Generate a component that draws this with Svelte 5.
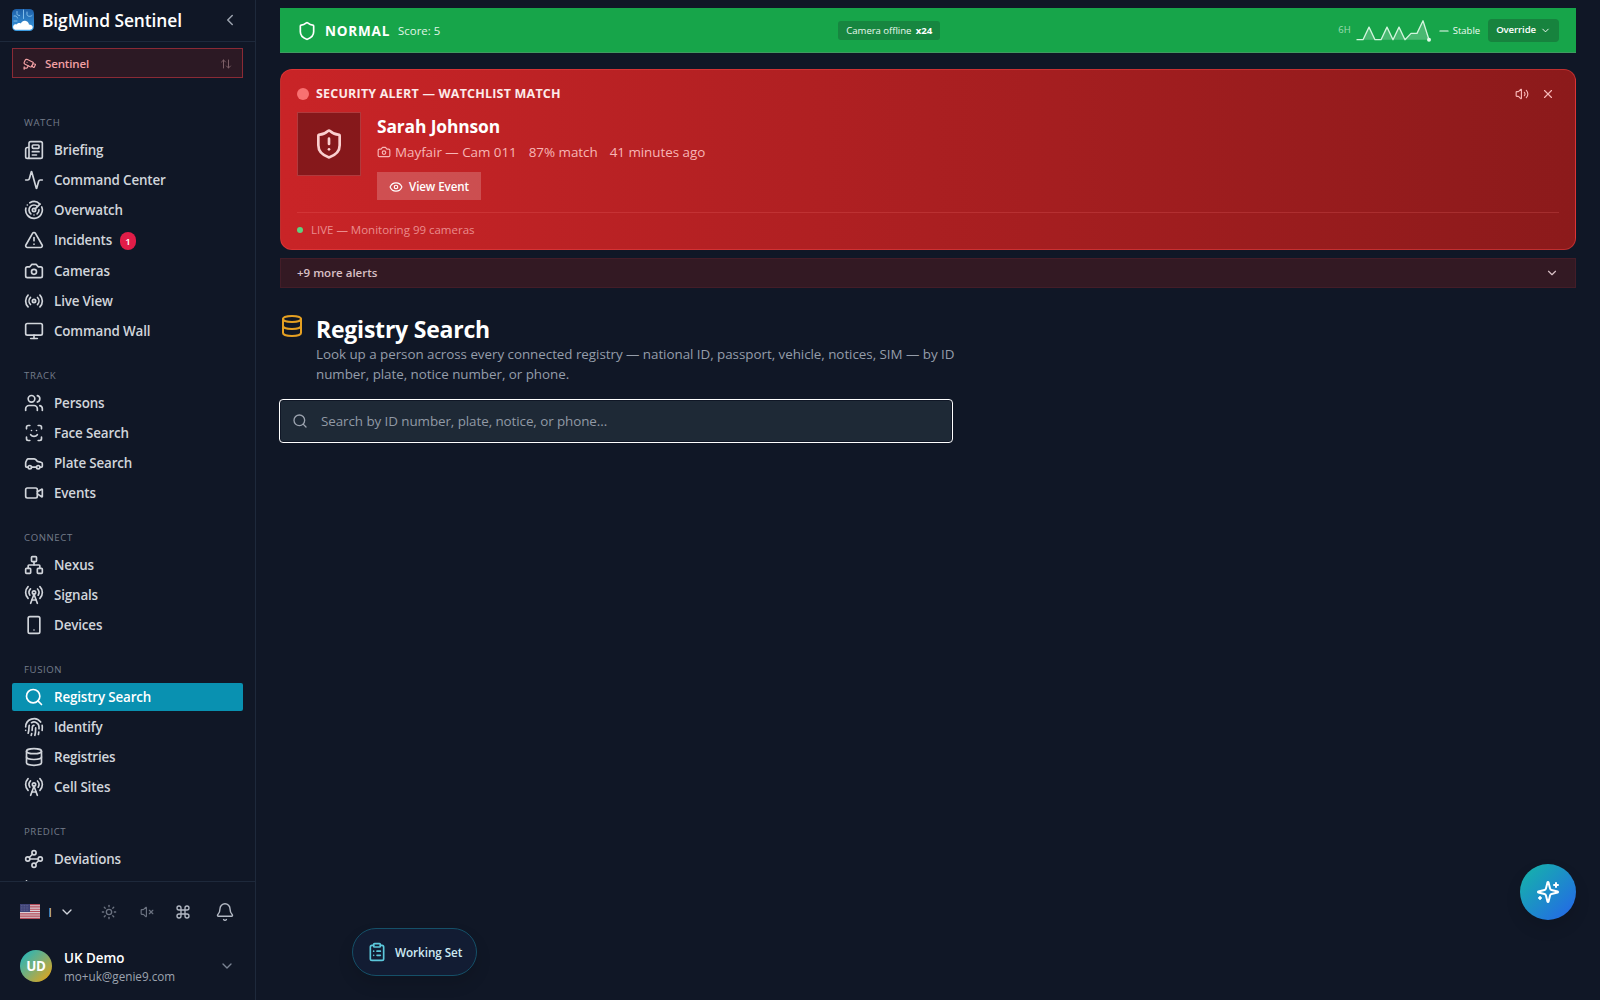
<script>
  const icons = {
    newspaper: '<path d="M15 18h-5"/><path d="M18 14h-8"/><path d="M4 22h16a2 2 0 0 0 2-2V4a2 2 0 0 0-2-2H8a2 2 0 0 0-2 2v16a2 2 0 0 1-4 0v-9a2 2 0 0 1 2-2h2"/><rect width="8" height="4" x="10" y="6" rx="1"/>',
    activity: '<path d="M22 12h-2.48a2 2 0 0 0-1.93 1.46l-2.35 8.36a.25.25 0 0 1-.48 0L9.24 2.18a.25.25 0 0 0-.48 0l-2.35 8.36A2 2 0 0 1 4.49 12H2"/>',
    radar: '<path d="M19.07 4.93A10 10 0 0 0 6.99 3.34"/><path d="M4 6h.01"/><path d="M2.29 9.62A10 10 0 1 0 21.31 8.35"/><path d="M16.24 7.76A6 6 0 1 0 8.23 16.67"/><path d="M12 18h.01"/><path d="M17.99 11.66A6 6 0 0 1 15.77 16.67"/><circle cx="12" cy="12" r="2"/><path d="m13.41 10.59 5.66-5.66"/>',
    alert: '<path d="m21.73 18-8-14a2 2 0 0 0-3.48 0l-8 14A2 2 0 0 0 4 21h16a2 2 0 0 0 1.73-3"/><path d="M12 9v4"/><path d="M12 17h.01"/>',
    camera: '<path d="M14.5 4h-5L7 7H4a2 2 0 0 0-2 2v9a2 2 0 0 0 2 2h16a2 2 0 0 0 2-2V9a2 2 0 0 0-2-2h-3l-2.5-3z"/><circle cx="12" cy="13" r="3"/>',
    radio: '<path d="M4.9 19.1C1 15.2 1 8.8 4.9 4.9"/><path d="M7.8 16.2c-2.3-2.3-2.3-6.1 0-8.5"/><circle cx="12" cy="12" r="2"/><path d="M16.2 7.8c2.3 2.3 2.3 6.1 0 8.5"/><path d="M19.1 4.9C23 8.8 23 15.1 19.1 19"/>',
    monitor: '<rect width="20" height="14" x="2" y="3" rx="2"/><path d="M8 21h8"/><path d="M12 17v4"/>',
    users: '<path d="M16 21v-2a4 4 0 0 0-4-4H6a4 4 0 0 0-4 4v2"/><circle cx="9" cy="7" r="4"/><path d="M22 21v-2a4 4 0 0 0-3-3.87"/><path d="M16 3.13a4 4 0 0 1 0 7.75"/>',
    face: '<path d="M3 7V5a2 2 0 0 1 2-2h2"/><path d="M17 3h2a2 2 0 0 1 2 2v2"/><path d="M21 17v2a2 2 0 0 1-2 2h-2"/><path d="M7 21H5a2 2 0 0 1-2-2v-2"/><path d="M8 14s1.5 2 4 2 4-2 4-2"/><path d="M9 9h.01"/><path d="M15 9h.01"/>',
    car: '<path d="M19 17h2c.6 0 1-.4 1-1v-3c0-.9-.7-1.7-1.5-1.9C18.7 10.6 16 10 16 10s-1.3-1.4-2.2-2.3c-.5-.4-1.1-.7-1.8-.7H5c-.6 0-1.1.4-1.4.9l-1.4 2.9A3.7 3.7 0 0 0 2 12v4c0 .6.4 1 1 1h2"/><circle cx="7" cy="17" r="2"/><path d="M9 17h6"/><circle cx="17" cy="17" r="2"/>',
    video: '<path d="m16 13 5.223 3.482a.5.5 0 0 0 .777-.416V7.87a.5.5 0 0 0-.752-.432L16 10.5"/><rect x="2" y="6" width="14" height="12" rx="2"/>',
    network: '<rect x="16" y="16" width="6" height="6" rx="1"/><rect x="2" y="16" width="6" height="6" rx="1"/><rect x="9" y="2" width="6" height="6" rx="1"/><path d="M5 16v-3a1 1 0 0 1 1-1h12a1 1 0 0 1 1 1v3"/><path d="M12 12V8"/>',
    tower: '<path d="M4.9 16.1C1 12.2 1 5.8 4.9 1.9"/><path d="M7.8 4.7a6.14 6.14 0 0 0-.8 7.5"/><circle cx="12" cy="9" r="2"/><path d="M16.2 4.8c2 2 2.26 5.11.8 7.47"/><path d="M19.1 1.9a9.96 9.96 0 0 1 0 14.1"/><path d="M9.5 18h5"/><path d="m8 22 4-11 4 11"/>',
    phone: '<rect width="14" height="20" x="5" y="2" rx="2"/><path d="M12 18h.01"/>',
    search: '<circle cx="11" cy="11" r="8"/><path d="m21 21-4.3-4.3"/>',
    fingerprint: '<path d="M12 10a2 2 0 0 0-2 2c0 1.02-.1 2.51-.26 4"/><path d="M14 13.12c0 2.38 0 6.38-1 8.88"/><path d="M17.29 21.02c.12-.6.43-2.3.5-3.02"/><path d="M2 12a10 10 0 0 1 18-6"/><path d="M2 16h.01"/><path d="M21.8 16c.2-2 .131-5.354 0-6"/><path d="M5 19.5C5.5 18 6 15 6 12a6 6 0 0 1 .34-2"/><path d="M8.65 22c.21-.66.45-1.32.57-2"/><path d="M9 6.8a6 6 0 0 1 9 5.2v2"/>',
    database: '<ellipse cx="12" cy="5" rx="9" ry="3"/><path d="M3 5V19A9 3 0 0 0 21 19V5"/><path d="M3 12A9 3 0 0 0 21 12"/>',
    waypoints: '<circle cx="12" cy="4.5" r="2.5"/><path d="m10.2 6.3-3.9 3.9"/><circle cx="4.5" cy="12" r="2.5"/><path d="M7 12h10"/><circle cx="19.5" cy="12" r="2.5"/><path d="m13.8 17.7 3.9-3.9"/><circle cx="12" cy="19.5" r="2.5"/>',
    chart: '<path d="M3 2.200v16.800a2 2 0 0 0 2 2h16"/><path d="m19 9-5 5-4-4-3 3"/>',
    cctv: '<path d="M16.75 12h3.632a1 1 0 0 1 .894 1.447l-2.034 4.069a1 1 0 0 1-1.708.134l-2.124-2.97"/><path d="M17.106 9.053a1 1 0 0 1 .447 1.341l-3.106 6.211a1 1 0 0 1-1.342.447L3.61 12.3a2.92 2.92 0 0 1-1.3-3.91L3.69 5.6a2.92 2.92 0 0 1 3.92-1.3z"/><path d="M2 19h3.76a2 2 0 0 0 1.8-1.1L9 15"/><path d="M2 21v-4"/><path d="M7 9h.01"/>',
    swap: '<path d="m21 16-4 4-4-4"/><path d="M17 20V4"/><path d="m3 8 4-4 4 4"/><path d="M7 4v16"/>',
    left: '<path d="m15 18-6-6 6-6"/>',
    down: '<path d="m6 9 6 6 6-6"/>',
    sun: '<circle cx="12" cy="12" r="4"/><path d="M12 2v2"/><path d="M12 20v2"/><path d="m4.93 4.93 1.41 1.41"/><path d="m17.66 17.66 1.41 1.41"/><path d="M2 12h2"/><path d="M20 12h2"/><path d="m6.34 17.66-1.41 1.41"/><path d="m19.07 4.93-1.41 1.41"/>',
    mute: '<path d="M11 4.702a.705.705 0 0 0-1.203-.498L6.413 7.587A1.4 1.4 0 0 1 5.416 8H3a1 1 0 0 0-1 1v6a1 1 0 0 0 1 1h2.416a1.4 1.4 0 0 1 .997.413l3.383 3.384A.705.705 0 0 0 11 19.298z"/><path d="m22 9-6 6"/><path d="m16 9 6 6"/>',
    volume: '<path d="M11 4.702a.705.705 0 0 0-1.203-.498L6.413 7.587A1.4 1.4 0 0 1 5.416 8H3a1 1 0 0 0-1 1v6a1 1 0 0 0 1 1h2.416a1.4 1.4 0 0 1 .997.413l3.383 3.384A.705.705 0 0 0 11 19.298z"/><path d="M16 9a5 5 0 0 1 0 6"/><path d="M19.364 18.364a9 9 0 0 0 0-12.728"/>',
    command: '<path d="M15 6v12a3 3 0 1 0 3-3H6a3 3 0 1 0 3 3V6a3 3 0 1 0-3 3h12a3 3 0 1 0-3-3"/>',
    bell: '<path d="M10.268 21a2 2 0 0 0 3.464 0"/><path d="M3.262 15.326A1 1 0 0 0 4 17h16a1 1 0 0 0 .74-1.673C19.41 13.956 18 12.499 18 8A6 6 0 0 0 6 8c0 4.499-1.411 5.956-2.738 7.326"/>',
    shield: '<path d="M20 13c0 5-3.5 7.5-7.66 8.95a1 1 0 0 1-.67-.01C7.5 20.5 4 18 4 13V6a1 1 0 0 1 1-1c2 0 4.5-1.2 6.24-2.72a1.17 1.17 0 0 1 1.52 0C14.51 3.81 17 5 19 5a1 1 0 0 1 1 1z"/>',
    shieldAlert: '<path d="M20 13c0 5-3.5 7.5-7.66 8.95a1 1 0 0 1-.67-.01C7.5 20.5 4 18 4 13V6a1 1 0 0 1 1-1c2 0 4.5-1.2 6.24-2.72a1.17 1.17 0 0 1 1.52 0C14.51 3.81 17 5 19 5a1 1 0 0 1 1 1z"/><path d="M12 8v4"/><path d="M12 16h.01"/>',
    eye: '<path d="M2.062 12.348a1 1 0 0 1 0-.696 10.75 10.75 0 0 1 19.876 0 1 1 0 0 1 0 .696 10.75 10.75 0 0 1-19.876 0"/><circle cx="12" cy="12" r="3"/>',
    close: '<path d="M18 6 6 18"/><path d="m6 6 12 12"/>',
    minus: '<path d="M5 12h14"/>',
    clipboard: '<rect width="8" height="4" x="8" y="2" rx="1"/><path d="M16 4h2a2 2 0 0 1 2 2v14a2 2 0 0 1-2 2H6a2 2 0 0 1-2-2V6a2 2 0 0 1 2-2h2"/><path d="M12 11h4"/><path d="M12 16h4"/><path d="M8 11h.01"/><path d="M8 16h.01"/>',
    sparkles: '<path d="M9.937 15.5A2 2 0 0 0 8.5 14.063l-6.135-1.582a.5.5 0 0 1 0-.962L8.5 9.936A2 2 0 0 0 9.937 8.5l1.582-6.135a.5.5 0 0 1 .963 0L14.063 8.5A2 2 0 0 0 15.5 9.937l6.135 1.581a.5.5 0 0 1 0 .964L15.5 14.063a2 2 0 0 0-1.437 1.437l-1.582 6.135a.5.5 0 0 1-.963 0z"/><path d="M20 3v4"/><path d="M22 5h-4"/><path d="M4 17v2"/><path d="M5 18H3"/>'
  };

  const sections = [
    { title: 'WATCH', items: [
      { label: 'Briefing', icon: 'newspaper' },
      { label: 'Command Center', icon: 'activity' },
      { label: 'Overwatch', icon: 'radar' },
      { label: 'Incidents', icon: 'alert', badge: 1 },
      { label: 'Cameras', icon: 'camera' },
      { label: 'Live View', icon: 'radio' },
      { label: 'Command Wall', icon: 'monitor' }
    ] },
    { title: 'TRACK', items: [
      { label: 'Persons', icon: 'users' },
      { label: 'Face Search', icon: 'face' },
      { label: 'Plate Search', icon: 'car' },
      { label: 'Events', icon: 'video' }
    ] },
    { title: 'CONNECT', items: [
      { label: 'Nexus', icon: 'network' },
      { label: 'Signals', icon: 'tower' },
      { label: 'Devices', icon: 'phone' }
    ] },
    { title: 'FUSION', items: [
      { label: 'Registry Search', icon: 'search', active: true },
      { label: 'Identify', icon: 'fingerprint' },
      { label: 'Registries', icon: 'database' },
      { label: 'Cell Sites', icon: 'tower' }
    ] },
    { title: 'PREDICT', items: [
      { label: 'Deviations', icon: 'waypoints' },
      { label: '', icon: 'chart' }
    ] }
  ];

  const scores = [0, 0, 2, 0, 0, 2, 0, 2, 0, 1, 1, 3, 0];
  const line = scores.map((s, i) => `${1 + i * 6},${20.7 - s * 6.3}`).join(' ');
</script>

{#snippet icon(name, size = 20, stroke = 2)}
  <svg class="icon" width={size} height={size} viewBox="0 0 24 24" fill="none" stroke="currentColor" stroke-width={stroke} stroke-linecap="round" stroke-linejoin="round">{@html icons[name]}</svg>
{/snippet}

<div class="app">
  <aside>
    <header class="brand">
      <svg class="logo" width="22" height="22" viewBox="0 0 22 22">
        <defs>
          <linearGradient id="sky" x1="0" y1="0" x2="0" y2="1">
            <stop offset="0" stop-color="#1d5fa8" /><stop offset="1" stop-color="#3b9be0" />
          </linearGradient>
        </defs>
        <rect width="22" height="22" rx="4.5" fill="url(#sky)" />
        <path d="M2 7c2-.5 3 .5 3.500 2M5 2.500v2c0 1.500 1 2 2.500 2M11.500 1v8.500M15 3v2.500c0 2 3.500 2.500 5 1M2 12h3" fill="none" stroke="#8cc6ef" stroke-width=".9" stroke-linecap="round" />
        <path d="M4 20.800c-2.500 0-3.500-2.300-2.600-4 .7-1.400 2.300-1.700 3.200-1.300.8-1.400 2.800-1.900 4.300-1 .9-2.400 3-3.200 5-2.600 2 .6 3 2 3 3.600 2 0 3.800 1 3.800 2.800 0 1.600-1.200 2.500-3 2.500z" fill="#fff" />
      </svg>
      <h1>BigMind Sentinel</h1>
      <button class="plain collapse">{@render icon('left', 18)}</button>
    </header>

    <button class="switcher">
      {@render icon('cctv', 14)}
      <span>Sentinel</span>
      <i>{@render icon('swap', 12)}</i>
    </button>

    <nav>
      {#each sections as section}
        <h2>{section.title}</h2>
        <ul>
          {#each section.items as item}
            <li class:active={item.active} class:tall={item.badge}>
              {@render icon(item.icon)}
              <span>{item.label}</span>
              {#if item.badge}<b>{item.badge}</b>{/if}
            </li>
          {/each}
        </ul>
      {/each}
    </nav>

    <footer>
      <div class="tools">
        <button class="plain lang">
          <svg width="20" height="15" viewBox="0 0 20 15">
            <rect width="20" height="15" fill="#d9ccd3" />
            <path d="M0 .6h20M0 2.900h20M0 5.200h20M0 7.500h20M0 9.800h20M0 12.100h20M0 14.400h20" stroke="#b54c5b" stroke-width="1.150" />
            <rect width="10" height="8" fill="#3f4377" />
            <path d="M1 1.500h8M1 3.200h8M1 4.900h8M1 6.600h8" stroke="#7477a0" stroke-width=".6" stroke-dasharray=".8 .8" />
          </svg>
          <span>I</span>
          {@render icon('down', 16)}
        </button>
        <button class="plain dim sun">{@render icon('sun', 16)}</button>
        <button class="plain dim mute">{@render icon('mute', 14)}</button>
        <button class="plain cmd">{@render icon('command', 16)}</button>
        <button class="plain bell">{@render icon('bell', 20, 1.7)}</button>
      </div>
      <div class="user">
        <div class="avatar">UD</div>
        <div class="who">
          <strong>UK Demo</strong>
          <small>mo+uk@genie9.com</small>
        </div>
        {@render icon('down', 16)}
      </div>
    </footer>
  </aside>

  <main>
    <section class="status">
      <div class="level">
        {@render icon('shield', 20)}
        <strong>NORMAL</strong>
        <span>Score: 5</span>
      </div>
      <div class="chip">Camera offline <b>x24</b></div>
      <div class="trend">
        <span class="range">6H</span>
        <svg class="spark" width="76" height="24" viewBox="0 0 76 24">
          <polygon points="1,20.7 {line} 73,20.7" fill="#fff" fill-opacity=".22" />
          <polyline points={line} fill="none" stroke="#d3f5de" stroke-width="1.300" stroke-linejoin="round" stroke-linecap="round" />
          <circle cx="73" cy="20.7" r="2" fill="#e4faeb" />
        </svg>
        <span class="stable">{@render icon('minus', 14)}Stable</span>
        <button class="override">Override {@render icon('down', 11)}</button>
      </div>
    </section>

    <section class="alert">
      <div class="alert-head">
        <i class="pulse"></i>
        <h3>SECURITY ALERT — WATCHLIST MATCH</h3>
        <button class="plain">{@render icon('volume', 14)}</button>
        <button class="plain">{@render icon('close', 14)}</button>
      </div>
      <div class="alert-body">
        <div class="thumb">{@render icon('shieldAlert', 32)}</div>
        <div class="details">
          <h4>Sarah Johnson</h4>
          <p>
            <span class="cam">{@render icon('camera', 14)}Mayfair — Cam 011</span>
            <span>87% match</span>
            <span>41 minutes ago</span>
          </p>
          <button class="view">{@render icon('eye', 14)}View Event</button>
        </div>
      </div>
      <div class="live"><i></i>LIVE — Monitoring 99 cameras</div>
    </section>

    <button class="more">+9 more alerts {@render icon('down', 14)}</button>

    <div class="heading">
      {@render icon('database', 24)}
      <div>
        <h1>Registry Search</h1>
        <p>Look up a person across every connected registry — national ID, passport, vehicle, notices, SIM — by ID<br />number, plate, notice number, or phone.</p>
      </div>
    </div>

    <label class="search">
      {@render icon('search', 16)}
      <input placeholder="Search by ID number, plate, notice, or phone..." />
    </label>
  </main>

  <button class="working">{@render icon('clipboard', 20)}Working Set</button>
  <button class="fab">{@render icon('sparkles', 24)}</button>
</div>

<style>
  :global(body) { background: #101726; overflow: hidden; }
  .app {
    position: relative;
    display: flex;
    width: 1600px;
    height: 1000px;
    overflow: hidden;
    color: #d1d5db;
    background: #101726;
    font: 400 13.4px/20px 'Open Sans', 'Noto Sans', sans-serif;
  }
  h1, h2, h3, h4, p, ul { margin: 0; padding: 0; list-style: none; }
  button { margin: 0; padding: 0; border: 0; font: inherit; color: inherit; background: none; }
  i { font-style: normal; }
  .icon { display: block; flex: none; }
  .plain { display: flex; align-items: center; }

  aside {
    display: flex;
    flex-direction: column;
    flex: none;
    box-sizing: border-box;
    width: 256px;
    border-right: 1px solid #1e293b;
  }
  .brand {
    display: flex;
    align-items: center;
    box-sizing: border-box;
    height: 42px;
    padding: 0 16px 1px 12px;
    border-bottom: 1px solid #1e293b;
  }
  .brand h1 { margin-left: 8px; font-size: 17.4px; font-weight: 600; letter-spacing: -.1px; color: #fff; }
  .collapse { margin-left: auto; color: #9ca3af; }

  .switcher {
    display: flex;
    align-items: center;
    flex: none;
    gap: 8px;
    box-sizing: border-box;
    height: 30px;
    margin: 6px 12px 0;
    padding: 1px 10px 0;
    border: 1px solid #8a2a35;
    background: #2c1924;
    color: #f2a0a3;
    font-size: 11.5px;
    font-weight: 600;
    letter-spacing: -.14px;
  }
  .switcher i { margin-left: auto; color: #7d5f67; }

  nav { flex: 1; min-height: 0; padding: 14px 12px 0; overflow: hidden; }
  nav h2 {
    box-sizing: border-box;
    height: 44px;
    padding: 23px 12px 5px;
    font-size: 9.6px;
    font-weight: 400;
    line-height: 16px;
    letter-spacing: .6px;
    color: #747c8a;
  }
  ul { display: flex; flex-direction: column; gap: 2px; }
  li {
    display: flex;
    align-items: center;
    gap: 10px;
    height: 28px;
    padding: 0 12px;
    border-radius: 2px;
    font-weight: 600;
    letter-spacing: -.15px;
  }
  li.tall { box-sizing: border-box; height: 29px; padding-bottom: 1px; }
  li.active { background: #0991b1; color: #fff; }
  li b {
    display: grid;
    place-items: center;
    width: 16px;
    height: 18px;
    margin: 1px 0 0 -2px;
    border-radius: 9px;
    background: #e11d48;
    color: #fff;
    font-size: 9.6px;
    font-weight: 600;
    letter-spacing: 0;
  }

  footer {
    flex: none;
    box-sizing: border-box;
    height: 119px;
    border-top: 1px solid #1e293b;
  }
  .tools { display: flex; align-items: center; height: 59px; margin-bottom: 2px; padding-left: 20px; color: #b3b9c4; }
  .lang { color: #d1d5db; }
  .lang span { width: 4px; margin: 0 7px 0 8px; }
  .lang .icon { width: 16px; }
  .dim { color: #6b7280; }
  .sun { margin-left: 26px; }
  .mute { margin-left: 23px; }
  .cmd { margin-left: 21px; }
  .bell { margin-left: 24px; }
  .user { display: flex; align-items: center; height: 46px; padding: 0 20px; color: #7b8493; }
  .avatar {
    display: grid;
    place-items: center;
    width: 32px;
    height: 32px;
    border-radius: 50%;
    background: linear-gradient(135deg, #2bb5b5 10%, #7fae74 50%, #dba51f 90%);
    color: #fff;
    font-size: 13.4px;
    font-weight: 700;
    letter-spacing: -.3px;
  }
  .who { flex: 1; margin-left: 12px; }
  .who strong { display: block; color: #fff; font-weight: 600; line-height: 20px; letter-spacing: 0; }
  .who small { display: block; color: #9ca3af; font-size: 11.7px; line-height: 16px; }

  main { flex: 1; min-width: 0; padding: 8px 24px 0; }

  .status {
    display: flex;
    align-items: center;
    justify-content: space-between;
    box-sizing: border-box;
    height: 45px;
    padding: 0 17px;
    border-bottom: 1px solid #3f9c61;
    background: #17a54a;
    color: #fff;
  }
  .level { display: flex; align-items: center; gap: 8px; padding-top: 1px; }
  .level strong { font-size: 13.5px; font-weight: 700; letter-spacing: .8px; }
  .level span { font-size: 11.4px; color: #e0f6e7; }
  .chip {
    padding: 0 8px;
    border-radius: 3px;
    background: #178640;
    color: #e9f8ee;
    font-size: 9.6px;
    font-weight: 500;
    line-height: 19px;
    letter-spacing: -.05px;
  }
  .chip b { margin-left: 2px; font-weight: 700; color: #fff; }
  .trend { display: flex; align-items: center; font-size: 9.5px; }
  .range { color: #9fdcb3; }
  .spark { margin: 2px 0 0 5px; }
  .stable { display: flex; align-items: center; gap: 2px; margin: 0 8px 0 5px; padding-top: 1px; font-weight: 500; color: #f0fbf3; }
  .stable .icon { width: 14px; }
  .override {
    display: flex;
    align-items: center;
    gap: 4px;
    height: 23px;
    padding: 0 8px;
    border-radius: 4px;
    background: #17833e;
    font-size: 9.6px;
    font-weight: 600;
    letter-spacing: -.1px;
    color: #fff;
  }

  .alert {
    box-sizing: border-box;
    height: 181px;
    margin-top: 16px;
    padding: 16px 16px 0;
    border: 1px solid rgba(239, 68, 68, .5);
    border-radius: 12px;
    background: linear-gradient(to right, #c92427, #8c1a1b);
    color: #f7b6b6;
  }
  .alert-head { display: flex; align-items: center; height: 15px; }
  .pulse { width: 12px; height: 12px; border-radius: 50%; background: #f87171; }
  .alert-head h3 { flex: 1; margin-left: 7px; padding-top: 1px; font-size: 12.5px; font-weight: 700; letter-spacing: .2px; color: #fdeaea; }
  .alert-head .plain { margin-right: 4px; }
  .alert-head .plain + .plain { margin-left: 8px; }
  .alert-body { display: flex; gap: 16px; margin-top: 11px; }
  .thumb {
    display: grid;
    place-items: center;
    box-sizing: border-box;
    width: 64px;
    height: 64px;
    border: 1px solid #b03a3d;
    background: #86181b;
    color: #fbcfcf;
  }
  .details h4 { margin-top: 1px; font-size: 17.4px; font-weight: 700; line-height: 26px; letter-spacing: -.13px; color: #fff; }
  .details p { display: flex; gap: 12px; margin-top: 3px; line-height: 20px; letter-spacing: -.02px; }
  .cam { display: flex; align-items: center; gap: 4px; }
  .view {
    display: flex;
    align-items: center;
    gap: 6px;
    height: 28px;
    margin-top: 10px;
    padding: 1px 12px 0;
    box-sizing: border-box;
    background: rgba(255, 255, 255, .2);
    color: #fff;
    font-size: 11.6px;
    font-weight: 600;
    letter-spacing: -.09px;
  }
  .live {
    display: flex;
    align-items: center;
    gap: 8px;
    height: 34px;
    margin-top: 12px;
    border-top: 1px solid rgba(248, 113, 113, .22);
    color: #ea8c8d;
    font-size: 11.5px;
    letter-spacing: -.01px;
  }
  .live i { width: 6px; height: 6px; margin-top: -1px; border-radius: 50%; background: #5fd07e; }

  .more {
    display: flex;
    align-items: center;
    justify-content: space-between;
    box-sizing: border-box;
    width: 100%;
    height: 30px;
    margin-top: 8px;
    padding: 0 16px;
    border: 1px solid #431d28;
    background: #331923;
    color: #d9c0c6;
    font-size: 11.5px;
    font-weight: 600;
  }

  .heading { display: flex; gap: 12px; margin-top: 26px; color: #e5a022; }
  .heading h1 { font-size: 23px; font-weight: 700; line-height: 30px; letter-spacing: -.22px; color: #fff; }
  .heading p { color: #959daa; letter-spacing: -.04px; white-space: nowrap; }

  .search {
    display: flex;
    align-items: center;
    gap: 13px;
    box-sizing: border-box;
    width: 672px;
    height: 42px;
    margin-top: 16px;
    padding: 0 11px;
    border: 1px solid #101726;
    border-radius: 3px;
    outline: 1px solid #fff;
    background: #1e2936;
    color: #9ca3af;
  }
  input { flex: 1; padding: 0; border: 0; outline: 0; background: none; font: inherit; letter-spacing: -.07px; }
  input::placeholder { color: #9199a5; opacity: 1; }

  .working {
    position: absolute;
    left: 352px;
    top: 928px;
    display: flex;
    align-items: center;
    gap: 8px;
    box-sizing: border-box;
    width: 125px;
    height: 48px;
    padding-left: 14px;
    border: 1px solid #155068;
    border-radius: 24px;
    background: #121c33;
    color: #cdeaf3;
    font-size: 11.7px;
    font-weight: 600;
    letter-spacing: -.06px;
    box-shadow: 0 8px 16px rgba(0, 0, 0, .12);
  }
  .working .icon { color: #5cc8dc; }
  .fab {
    position: absolute;
    left: 1520px;
    top: 864px;
    display: grid;
    place-items: center;
    width: 56px;
    height: 56px;
    border-radius: 50%;
    background: linear-gradient(135deg, #14b8a6, #2563eb);
    color: #fff;
    box-shadow: 0 8px 16px rgba(0, 0, 0, .12);
  }
</style>
